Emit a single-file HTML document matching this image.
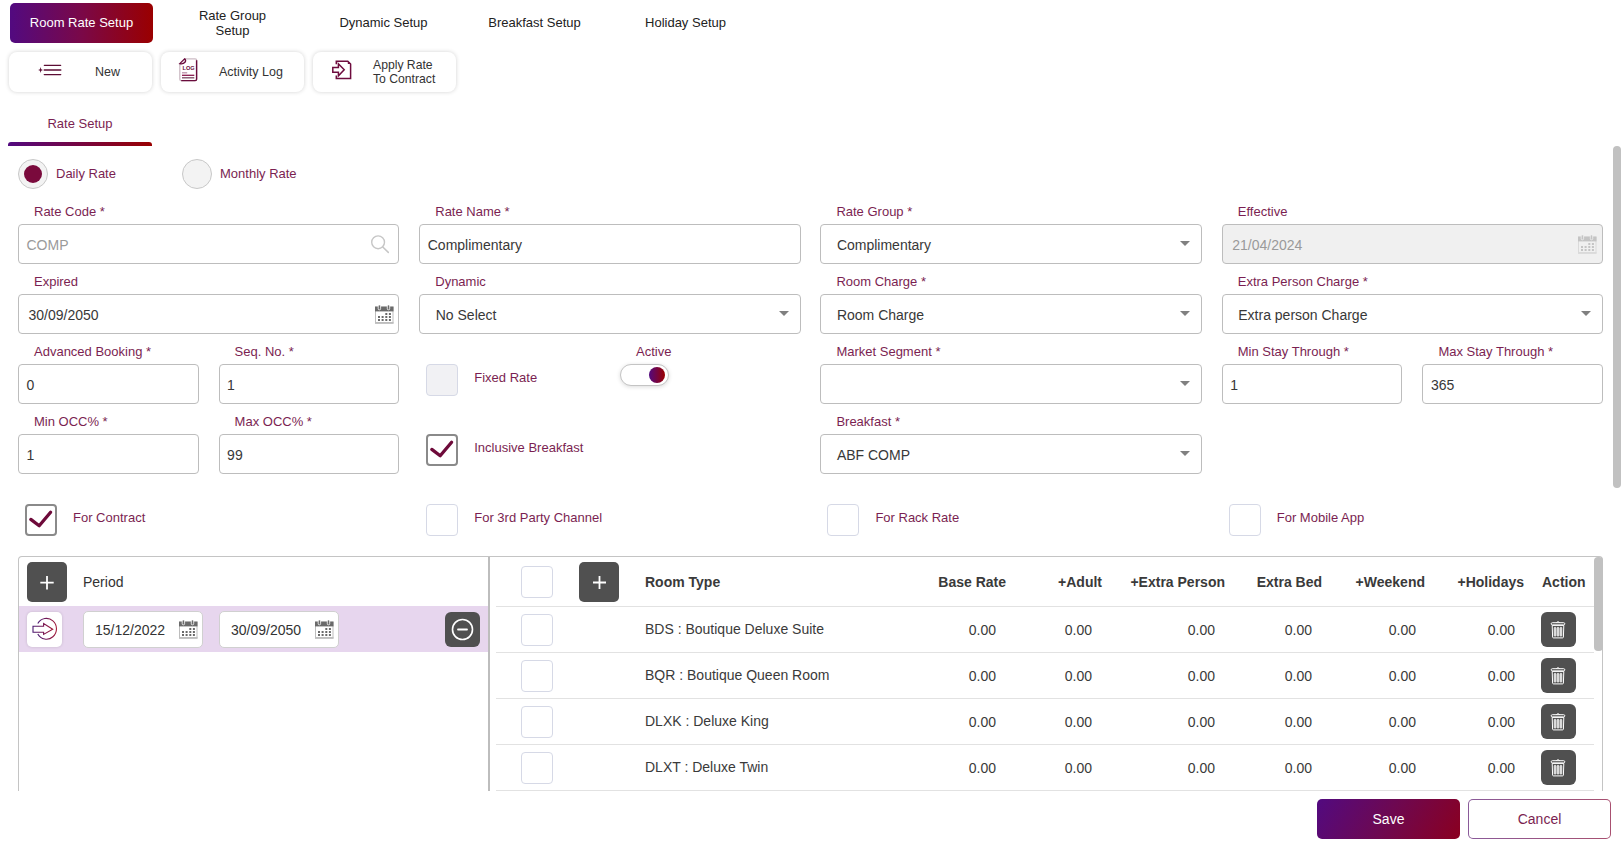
<!DOCTYPE html>
<html><head><meta charset="utf-8">
<style>
*{box-sizing:border-box;margin:0;padding:0}
html,body{width:1623px;height:844px;overflow:hidden;background:#fff;font-family:"Liberation Sans",sans-serif;color:#333}
.a{position:absolute}
.tab{position:absolute;top:3px;width:143px;height:40px;display:flex;align-items:center;justify-content:center;text-align:center;font-size:13px;line-height:15px;color:#222;padding-bottom:2px}
.tab.on{background:linear-gradient(90deg,#520a80 0%,#7a0848 50%,#9a0000 100%);color:#fff;border-radius:5px}
.btn{position:absolute;top:52px;width:143px;height:40px;border-radius:8px;box-shadow:0 0 4px rgba(0,0,0,.18);background:#fff;font-size:13px;color:#333}
.lbl{position:absolute;font-size:13px;color:#7b1f52;white-space:nowrap;line-height:16px;margin-top:1px}
.inp{position:absolute;height:40px;border:1px solid #bdbdbd;border-radius:4px;background:#fff;font-size:14px;color:#383838;line-height:38px;padding-top:1px;white-space:nowrap}
.car{margin-top:-1px}
.car{position:absolute;right:11px;top:17px;width:0;height:0;border-left:5px solid transparent;border-right:5px solid transparent;border-top:5px solid #808080}
.cb{position:absolute;width:32px;height:32px;border:1px solid #d6d9e6;border-radius:4px;background:#fff}
.cbt{position:absolute;font-size:13px;color:#7b1f52;line-height:16px;white-space:nowrap;margin-top:1px}

.dk{position:absolute;background:#505050;border-radius:5px}
.dk svg{display:block}
.di{position:absolute;height:37px;border:1px solid #d0d0d0;border-radius:5px;background:#fff;font-size:14px;line-height:35px;padding-left:11px;padding-top:1px;color:#333}
.th{position:absolute;top:574px;font-size:14px;font-weight:bold;color:#3a3a3a;line-height:16px;white-space:nowrap}
.td{position:absolute;font-size:14px;color:#3a3a3a;line-height:16px;white-space:nowrap;margin-top:1px}
.cal{position:absolute;right:5px;top:8px;width:19px;height:18px}

.ck{border:2px solid #8a8a8a !important}
</style></head><body>

<!-- top tabs -->
<div class="tab on" style="left:10px">Room Rate Setup</div>
<div class="tab" style="left:161px;padding-bottom:0">Rate Group<br>Setup</div>
<div class="tab" style="left:312px">Dynamic Setup</div>
<div class="tab" style="left:463px">Breakfast Setup</div>
<div class="tab" style="left:614px">Holiday Setup</div>

<!-- action buttons -->
<div class="btn" style="left:9px"></div>
<div class="btn" style="left:161px"></div>
<div class="btn" style="left:313px"></div>
<svg class="a" style="left:30px;top:55px" width="40" height="30" viewBox="30 55 40 30"><g stroke="#5c0c34" stroke-linecap="round"><path d="M44.3 65.3h16.4" stroke-width="1.2"/><path d="M44.3 70h16.4" stroke-width="1.6"/><path d="M44.3 74.6h16.4" stroke-width="1.4"/></g><path d="M40.6 67 L41.2 69.3 L43 70 L41.2 70.7 L40.6 73 L40 70.7 L38.2 70 L40 69.3Z" fill="#5c0c34"/></svg>
<div class="a" style="left:95px;top:64px;font-size:12.5px;line-height:16px;color:#333">New</div>
<svg class="a" style="left:170px;top:52px" width="40" height="38" viewBox="170 52 40 38"><path d="M184.6 58.8H195.2Q196.6 58.8 196.6 60.2V79.2Q196.6 80.6 195.2 80.6H181.2Q179.8 80.6 179.8 79.2V63.6" fill="none" stroke="#cdbcc5" stroke-width="1.3"/><path d="M196.6 60.2V79.2Q196.6 80.6 195.2 80.6H181.2" fill="none" stroke="#6a0c3c" stroke-width="1.4"/><path d="M179.8 63.6L184.6 58.8Q186.4 60.6 185 62.3Q183 64.4 179.8 63.6Z" fill="#f6eaf0" stroke="#6a0c3c" stroke-width="1.3"/><text x="188.6" y="69.8" font-family="Liberation Sans" font-size="5.6" font-weight="bold" fill="#6a0c3c" text-anchor="middle">LOG</text><path d="M182 72.8h5.2" stroke="#b88aa4" stroke-width="1.2"/><path d="M182 75.3h12.3" stroke="#8a1a4e" stroke-width="1.3"/><path d="M182 77.8h12.3" stroke="#7a4a64" stroke-width="1.3"/></svg>
<div class="a" style="left:219px;top:64px;font-size:12.5px;line-height:16px;color:#333">Activity Log</div>
<svg class="a" style="left:325px;top:55px" width="35" height="30" viewBox="325 55 35 30"><g fill="none" stroke="#6e0c3e" stroke-width="1.5" stroke-linejoin="miter"><path d="M336.3 64.2V61.2H347.8L350.6 64V78.6H336.3V75.4"/><path d="M332.8 67.4H338.4V63.8L344.2 69.8L338.4 75.8V72.2H332.8Z"/></g><path d="M347.8 61.2L350.6 64H347.8Z" fill="#6e0c3e"/></svg>
<div class="a" style="left:373px;top:58px;font-size:12.2px;line-height:14px;color:#333">Apply Rate<br>To Contract</div>

<!-- sub tab -->
<div class="a" style="left:8px;top:116px;width:144px;text-align:center;font-size:13px;color:#7b1f52;line-height:16px">Rate Setup</div>
<div class="a" style="left:8px;top:142px;width:144px;height:4px;border-radius:3px 3px 0 0;background:linear-gradient(90deg,#520a80,#9a0000)"></div>


<!-- radios -->
<div class="a" style="left:18px;top:159px;width:30px;height:30px;border-radius:50%;border:1px solid #c8c8c8;background:#f3f3f3"></div>
<div class="a" style="left:24.1px;top:165.1px;width:18px;height:18px;border-radius:50%;background:#7a0a3c"></div>
<div class="lbl" style="left:56px;top:165px">Daily Rate</div>
<div class="a" style="left:182px;top:159px;width:30px;height:30px;border-radius:50%;border:1px solid #c8c8c8;background:#f3f3f3"></div>
<div class="lbl" style="left:220px;top:165px">Monthly Rate</div>

<!-- row 1 -->
<div class="lbl" style="left:34px;top:203px">Rate Code *</div>
<div class="inp" style="left:18px;top:224px;width:381.25px;padding-left:7.5px;color:#9a9a9a">COMP</div>
<svg class="a" style="left:365px;top:232px" width="30" height="25" viewBox="365 232 30 25"><circle cx="378.1" cy="242.3" r="6.4" fill="none" stroke="#c6c6c6" stroke-width="1.4"/><path d="M382.8 247L388.3 252.4" stroke="#c6c6c6" stroke-width="1.5" stroke-linecap="round"/></svg>
<div class="lbl" style="left:435.25px;top:203px">Rate Name *</div>
<div class="inp" style="left:419.25px;top:224px;width:381.25px;padding-left:7.5px">Complimentary</div>
<div class="lbl" style="left:836.4px;top:203px">Rate Group *</div>
<div class="inp" style="left:820.4px;top:224px;width:381.25px;padding-left:15.5px">Complimentary<i class="car"></i></div>
<div class="lbl" style="left:1237.75px;top:203px">Effective</div>
<div class="inp" style="left:1221.75px;top:224px;width:381.25px;padding-left:9.5px;background:#f0f0f0;color:#9a9a9a">21/04/2024</div>
<svg class="a" style="left:1578px;top:235px" width="19" height="19" viewBox="0 0 19 19"><rect x="0.5" y="2" width="17.5" height="16" fill="#f0f0f0" stroke="#dadada" stroke-width="1"/><rect x="0" y="1.6" width="18.5" height="4.8" fill="#c4c4c4"/><rect x="3.2" y="0" width="2.4" height="4.8" rx="1" fill="#c4c4c4" stroke="#f0f0f0" stroke-width="0.8"/><rect x="12.3" y="0" width="2.4" height="4.8" rx="1" fill="#c4c4c4" stroke="#f0f0f0" stroke-width="0.8"/><rect x="10.3" y="8" width="2" height="2" fill="#c4c4c4"/><rect x="13.9" y="8" width="2" height="2" fill="#c4c4c4"/><rect x="3" y="11" width="2" height="2" fill="#c4c4c4"/><rect x="6.6" y="11" width="2" height="2" fill="#c4c4c4"/><rect x="10.3" y="11" width="2" height="2" fill="#c4c4c4"/><rect x="13.9" y="11" width="2" height="2" fill="#c4c4c4"/><rect x="3" y="14" width="2" height="2" fill="#c4c4c4"/><rect x="6.6" y="14" width="2" height="2" fill="#c4c4c4"/><rect x="10.3" y="14" width="2" height="2" fill="#c4c4c4"/><rect x="13.9" y="14" width="2" height="2" fill="#c4c4c4"/><rect x="0" y="17" width="18.5" height="1.8" fill="#dadada"/></svg>

<!-- row 2 -->
<div class="lbl" style="left:34px;top:273px">Expired</div>
<div class="inp" style="left:18px;top:294px;width:381.25px;padding-left:9.5px">30/09/2050</div>
<svg class="a" style="left:374.5px;top:305px" width="19" height="19" viewBox="0 0 19 19"><rect x="0.5" y="2" width="17.5" height="16" fill="#fff" stroke="#bdbdbd" stroke-width="1"/><rect x="0" y="1.6" width="18.5" height="4.8" fill="#6a6a6a"/><rect x="3.2" y="0" width="2.4" height="4.8" rx="1" fill="#6a6a6a" stroke="#fff" stroke-width="0.8"/><rect x="12.3" y="0" width="2.4" height="4.8" rx="1" fill="#6a6a6a" stroke="#fff" stroke-width="0.8"/><rect x="10.3" y="8" width="2" height="2" fill="#6a6a6a"/><rect x="13.9" y="8" width="2" height="2" fill="#6a6a6a"/><rect x="3" y="11" width="2" height="2" fill="#6a6a6a"/><rect x="6.6" y="11" width="2" height="2" fill="#6a6a6a"/><rect x="10.3" y="11" width="2" height="2" fill="#6a6a6a"/><rect x="13.9" y="11" width="2" height="2" fill="#6a6a6a"/><rect x="3" y="14" width="2" height="2" fill="#6a6a6a"/><rect x="6.6" y="14" width="2" height="2" fill="#6a6a6a"/><rect x="10.3" y="14" width="2" height="2" fill="#6a6a6a"/><rect x="13.9" y="14" width="2" height="2" fill="#6a6a6a"/><rect x="0" y="17" width="18.5" height="1.8" fill="#bdbdbd"/></svg>
<div class="lbl" style="left:435.25px;top:273px">Dynamic</div>
<div class="inp" style="left:419.25px;top:294px;width:381.25px;padding-left:15.5px">No Select<i class="car"></i></div>
<div class="lbl" style="left:836.4px;top:273px">Room Charge *</div>
<div class="inp" style="left:820.4px;top:294px;width:381.25px;padding-left:15.5px">Room Charge<i class="car"></i></div>
<div class="lbl" style="left:1237.75px;top:273px">Extra Person Charge *</div>
<div class="inp" style="left:1221.75px;top:294px;width:381.25px;padding-left:15.5px">Extra person Charge<i class="car"></i></div>

<!-- row 3 -->
<div class="lbl" style="left:34px;top:343px">Advanced Booking *</div>
<div class="inp" style="left:18px;top:364px;width:180.6px;padding-left:7.5px">0</div>
<div class="lbl" style="left:234.6px;top:343px">Seq. No. *</div>
<div class="inp" style="left:218.6px;top:364px;width:180.6px;padding-left:7.5px">1</div>
<div class="cb" style="left:426.25px;top:364px;background:#f1f1f4"></div>
<div class="cbt" style="left:474.25px;top:369px">Fixed Rate</div>
<div class="lbl" style="left:636px;top:343px">Active</div>
<div class="a" style="left:620px;top:364px;width:49px;height:22px;border-radius:11px;background:#fff;border:1px solid #c4c4c4;box-shadow:0 1px 4px rgba(0,0,0,.14)"></div>
<div class="a" style="left:649.2px;top:366.9px;width:16px;height:16px;border-radius:50%;background:linear-gradient(90deg,#520a80,#9a0000)"></div>
<div class="lbl" style="left:836.4px;top:343px">Market Segment *</div>
<div class="inp" style="left:820.4px;top:364px;width:381.25px;padding-left:15.5px"><i class="car"></i></div>
<div class="lbl" style="left:1237.75px;top:343px">Min Stay Through *</div>
<div class="inp" style="left:1221.75px;top:364px;width:180.6px;padding-left:7.5px">1</div>
<div class="lbl" style="left:1438.4px;top:343px">Max Stay Through *</div>
<div class="inp" style="left:1422.4px;top:364px;width:180.6px;padding-left:7.5px">365</div>

<!-- row 4 -->
<div class="lbl" style="left:34px;top:413px">Min OCC% *</div>
<div class="inp" style="left:18px;top:434px;width:180.6px;padding-left:7.5px">1</div>
<div class="lbl" style="left:234.6px;top:413px">Max OCC% *</div>
<div class="inp" style="left:218.6px;top:434px;width:180.6px;padding-left:7.5px">99</div>
<div class="cb ck" style="left:426.25px;top:434px"><svg class="a" style="left:0;top:0" width="32" height="32" viewBox="0 0 32 32"><path d="M5.8 15.4L14.2 21.8L25.6 8.2" fill="none" stroke="#6e0a3a" stroke-width="3.3" stroke-linecap="round" stroke-linejoin="round" transform="translate(-2,-2)"/></svg></div>
<div class="cbt" style="left:474.25px;top:439px">Inclusive Breakfast</div>
<div class="lbl" style="left:836.4px;top:413px">Breakfast *</div>
<div class="inp" style="left:820.4px;top:434px;width:381.25px;padding-left:15.5px">ABF COMP<i class="car"></i></div>

<!-- checkbox row -->
<div class="cb ck" style="left:25px;top:504px"><svg class="a" style="left:0;top:0" width="32" height="32" viewBox="0 0 32 32"><path d="M5.8 15.4L14.2 21.8L25.6 8.2" fill="none" stroke="#6e0a3a" stroke-width="3.3" stroke-linecap="round" stroke-linejoin="round" transform="translate(-2,-2)"/></svg></div>
<div class="cbt" style="left:73px;top:509px">For Contract</div>
<div class="cb" style="left:426.25px;top:504px"></div>
<div class="cbt" style="left:474.25px;top:509px">For 3rd Party Channel</div>
<div class="cb" style="left:827.4px;top:504px"></div>
<div class="cbt" style="left:875.4px;top:509px">For Rack Rate</div>
<div class="cb" style="left:1228.75px;top:504px"></div>
<div class="cbt" style="left:1276.75px;top:509px">For Mobile App</div>


<!-- table container -->
<div class="a" style="left:18px;top:556px;width:1585px;height:260px;border:1px solid #c4c4c4;border-bottom:none;border-radius:4px 4px 0 0"></div>
<div class="a" style="left:488px;top:557px;width:2px;height:234px;background:#bdbdbd"></div>
<div class="a" style="left:1594px;top:557px;width:8.5px;height:94px;border-radius:4px;background:#c1c1c1"></div>
<div class="a" style="left:0;top:791px;width:1623px;height:53px;background:#fff"></div>

<!-- left panel -->
<div class="dk" style="left:27px;top:562px;width:40px;height:40px"><svg width="40" height="40"><path d="M20 14v13.4M13.3 20.7h13.4" stroke="#fff" stroke-width="1.8"/></svg></div>
<div class="a" style="left:83px;top:574px;font-size:14px;line-height:16px;color:#333">Period</div>
<div class="a" style="left:19px;top:606px;width:469px;height:46px;background:#e7d6ee"></div>
<div class="a" style="left:27px;top:612px;width:35px;height:35px;border-radius:5px;background:#fff;box-shadow:0 0 3px rgba(0,0,0,.15)"></div>
<svg class="a" style="left:27px;top:612px" width="35" height="35" viewBox="27 612 35 35"><defs><linearGradient id="ga" x1="0" x2="1"><stop offset="0" stop-color="#4a1870"/><stop offset="1" stop-color="#a01838"/></linearGradient></defs><g fill="none" stroke="url(#ga)" stroke-width="1.1"><path d="M37.8 623.6A10 10.4 0 1 1 37.8 634"/><path d="M33 626.2H43.6V623.6L52.7 629.3L43.6 634.4V632.3H33Z"/></g></svg>
<div class="di" style="left:83px;top:611px;width:120px">15/12/2022</div>
<svg class="a" style="left:178.5px;top:620px" width="19" height="19" viewBox="0 0 19 19"><rect x="0.5" y="2" width="17.5" height="16" fill="#fff" stroke="#bdbdbd" stroke-width="1"/><rect x="0" y="1.6" width="18.5" height="4.8" fill="#6a6a6a"/><rect x="3.2" y="0" width="2.4" height="4.8" rx="1" fill="#6a6a6a" stroke="#fff" stroke-width="0.8"/><rect x="12.3" y="0" width="2.4" height="4.8" rx="1" fill="#6a6a6a" stroke="#fff" stroke-width="0.8"/><rect x="10.3" y="8" width="2" height="2" fill="#6a6a6a"/><rect x="13.9" y="8" width="2" height="2" fill="#6a6a6a"/><rect x="3" y="11" width="2" height="2" fill="#6a6a6a"/><rect x="6.6" y="11" width="2" height="2" fill="#6a6a6a"/><rect x="10.3" y="11" width="2" height="2" fill="#6a6a6a"/><rect x="13.9" y="11" width="2" height="2" fill="#6a6a6a"/><rect x="3" y="14" width="2" height="2" fill="#6a6a6a"/><rect x="6.6" y="14" width="2" height="2" fill="#6a6a6a"/><rect x="10.3" y="14" width="2" height="2" fill="#6a6a6a"/><rect x="13.9" y="14" width="2" height="2" fill="#6a6a6a"/><rect x="0" y="17" width="18.5" height="1.8" fill="#bdbdbd"/></svg>
<div class="di" style="left:219px;top:611px;width:120px">30/09/2050</div>
<svg class="a" style="left:314.5px;top:620px" width="19" height="19" viewBox="0 0 19 19"><rect x="0.5" y="2" width="17.5" height="16" fill="#fff" stroke="#bdbdbd" stroke-width="1"/><rect x="0" y="1.6" width="18.5" height="4.8" fill="#6a6a6a"/><rect x="3.2" y="0" width="2.4" height="4.8" rx="1" fill="#6a6a6a" stroke="#fff" stroke-width="0.8"/><rect x="12.3" y="0" width="2.4" height="4.8" rx="1" fill="#6a6a6a" stroke="#fff" stroke-width="0.8"/><rect x="10.3" y="8" width="2" height="2" fill="#6a6a6a"/><rect x="13.9" y="8" width="2" height="2" fill="#6a6a6a"/><rect x="3" y="11" width="2" height="2" fill="#6a6a6a"/><rect x="6.6" y="11" width="2" height="2" fill="#6a6a6a"/><rect x="10.3" y="11" width="2" height="2" fill="#6a6a6a"/><rect x="13.9" y="11" width="2" height="2" fill="#6a6a6a"/><rect x="3" y="14" width="2" height="2" fill="#6a6a6a"/><rect x="6.6" y="14" width="2" height="2" fill="#6a6a6a"/><rect x="10.3" y="14" width="2" height="2" fill="#6a6a6a"/><rect x="13.9" y="14" width="2" height="2" fill="#6a6a6a"/><rect x="0" y="17" width="18.5" height="1.8" fill="#bdbdbd"/></svg>
<div class="dk" style="left:445px;top:612px;width:35px;height:35px;border-radius:6px"><svg width="35" height="35"><circle cx="17.5" cy="17.5" r="10" fill="none" stroke="#fff" stroke-width="1.6"/><path d="M13 17.5h9" stroke="#fff" stroke-width="1.8" stroke-linecap="round"/></svg></div>

<!-- right table header -->
<div class="cb" style="left:521px;top:566px;width:32px;height:32px"></div>
<div class="dk" style="left:579px;top:562px;width:40px;height:40px"><svg width="40" height="40"><path d="M20.5 14v13M14 20.5h13" stroke="#fff" stroke-width="1.8"/></svg></div>
<div class="th" style="left:645px">Room Type</div>
<div class="th" style="right:617px">Base Rate</div>
<div class="th" style="right:521px">+Adult</div>
<div class="th" style="right:398px">+Extra Person</div>
<div class="th" style="right:301px">Extra Bed</div>
<div class="th" style="right:198px">+Weekend</div>
<div class="th" style="right:99px">+Holidays</div>
<div class="th" style="left:1542px">Action</div>
<div class="a" style="left:496px;top:606px;width:1098px;height:1px;background:#e2e2e2"></div>
<div class="cb" style="left:521px;top:614px;width:32px;height:32px"></div>
<div class="td" style="left:645px;top:621px;margin-top:0">BDS : Boutique Deluxe Suite</div>
<div class="td" style="right:627px;top:621px">0.00</div>
<div class="td" style="right:531px;top:621px">0.00</div>
<div class="td" style="right:408px;top:621px">0.00</div>
<div class="td" style="right:311px;top:621px">0.00</div>
<div class="td" style="right:207px;top:621px">0.00</div>
<div class="td" style="right:108px;top:621px">0.00</div>
<div class="dk" style="left:1541px;top:612px;width:35px;height:35px;border-radius:6px"><svg width="35" height="35" viewBox="0 0 35 35"><g fill="none" stroke="#fff"><rect x="10.2" y="10.7" width="13.6" height="2.2" rx="1.1" stroke-width="1"/><path d="M15.3 10.6Q17 8.8 18.7 10.6" stroke-width="1"/><path d="M11.2 13.4H22.8L22.4 25.1Q22.3 25.9 21.5 25.9H12.5Q11.7 25.9 11.6 25.1Z" stroke-width="1"/><rect x="13.2" y="15.2" width="1.7" height="9" rx=".85" fill="#d0d0d0" stroke-width=".7"/><rect x="16.15" y="15.2" width="1.7" height="9" rx=".85" fill="#d0d0d0" stroke-width=".7"/><rect x="19.1" y="15.2" width="1.7" height="9" rx=".85" fill="#d0d0d0" stroke-width=".7"/></g></svg></div>
<div class="a" style="left:496px;top:652px;width:1098px;height:1px;background:#e2e2e2"></div>
<div class="cb" style="left:521px;top:660px;width:32px;height:32px"></div>
<div class="td" style="left:645px;top:667px;margin-top:0">BQR : Boutique Queen Room</div>
<div class="td" style="right:627px;top:667px">0.00</div>
<div class="td" style="right:531px;top:667px">0.00</div>
<div class="td" style="right:408px;top:667px">0.00</div>
<div class="td" style="right:311px;top:667px">0.00</div>
<div class="td" style="right:207px;top:667px">0.00</div>
<div class="td" style="right:108px;top:667px">0.00</div>
<div class="dk" style="left:1541px;top:658px;width:35px;height:35px;border-radius:6px"><svg width="35" height="35" viewBox="0 0 35 35"><g fill="none" stroke="#fff"><rect x="10.2" y="10.7" width="13.6" height="2.2" rx="1.1" stroke-width="1"/><path d="M15.3 10.6Q17 8.8 18.7 10.6" stroke-width="1"/><path d="M11.2 13.4H22.8L22.4 25.1Q22.3 25.9 21.5 25.9H12.5Q11.7 25.9 11.6 25.1Z" stroke-width="1"/><rect x="13.2" y="15.2" width="1.7" height="9" rx=".85" fill="#d0d0d0" stroke-width=".7"/><rect x="16.15" y="15.2" width="1.7" height="9" rx=".85" fill="#d0d0d0" stroke-width=".7"/><rect x="19.1" y="15.2" width="1.7" height="9" rx=".85" fill="#d0d0d0" stroke-width=".7"/></g></svg></div>
<div class="a" style="left:496px;top:698px;width:1098px;height:1px;background:#e2e2e2"></div>
<div class="cb" style="left:521px;top:706px;width:32px;height:32px"></div>
<div class="td" style="left:645px;top:713px;margin-top:0">DLXK : Deluxe King</div>
<div class="td" style="right:627px;top:713px">0.00</div>
<div class="td" style="right:531px;top:713px">0.00</div>
<div class="td" style="right:408px;top:713px">0.00</div>
<div class="td" style="right:311px;top:713px">0.00</div>
<div class="td" style="right:207px;top:713px">0.00</div>
<div class="td" style="right:108px;top:713px">0.00</div>
<div class="dk" style="left:1541px;top:704px;width:35px;height:35px;border-radius:6px"><svg width="35" height="35" viewBox="0 0 35 35"><g fill="none" stroke="#fff"><rect x="10.2" y="10.7" width="13.6" height="2.2" rx="1.1" stroke-width="1"/><path d="M15.3 10.6Q17 8.8 18.7 10.6" stroke-width="1"/><path d="M11.2 13.4H22.8L22.4 25.1Q22.3 25.9 21.5 25.9H12.5Q11.7 25.9 11.6 25.1Z" stroke-width="1"/><rect x="13.2" y="15.2" width="1.7" height="9" rx=".85" fill="#d0d0d0" stroke-width=".7"/><rect x="16.15" y="15.2" width="1.7" height="9" rx=".85" fill="#d0d0d0" stroke-width=".7"/><rect x="19.1" y="15.2" width="1.7" height="9" rx=".85" fill="#d0d0d0" stroke-width=".7"/></g></svg></div>
<div class="a" style="left:496px;top:744px;width:1098px;height:1px;background:#e2e2e2"></div>
<div class="cb" style="left:521px;top:752px;width:32px;height:32px"></div>
<div class="td" style="left:645px;top:759px;margin-top:0">DLXT : Deluxe Twin</div>
<div class="td" style="right:627px;top:759px">0.00</div>
<div class="td" style="right:531px;top:759px">0.00</div>
<div class="td" style="right:408px;top:759px">0.00</div>
<div class="td" style="right:311px;top:759px">0.00</div>
<div class="td" style="right:207px;top:759px">0.00</div>
<div class="td" style="right:108px;top:759px">0.00</div>
<div class="dk" style="left:1541px;top:750px;width:35px;height:35px;border-radius:6px"><svg width="35" height="35" viewBox="0 0 35 35"><g fill="none" stroke="#fff"><rect x="10.2" y="10.7" width="13.6" height="2.2" rx="1.1" stroke-width="1"/><path d="M15.3 10.6Q17 8.8 18.7 10.6" stroke-width="1"/><path d="M11.2 13.4H22.8L22.4 25.1Q22.3 25.9 21.5 25.9H12.5Q11.7 25.9 11.6 25.1Z" stroke-width="1"/><rect x="13.2" y="15.2" width="1.7" height="9" rx=".85" fill="#d0d0d0" stroke-width=".7"/><rect x="16.15" y="15.2" width="1.7" height="9" rx=".85" fill="#d0d0d0" stroke-width=".7"/><rect x="19.1" y="15.2" width="1.7" height="9" rx=".85" fill="#d0d0d0" stroke-width=".7"/></g></svg></div>
<div class="a" style="left:496px;top:790px;width:1098px;height:1px;background:#e2e2e2"></div>

<!-- footer buttons -->
<div class="a" style="left:1317px;top:799px;width:143px;height:40px;border-radius:5px;background:linear-gradient(120deg,#520a80 0%,#6e0850 50%,#8a0020 100%);color:#fff;font-size:14px;line-height:40px;text-align:center">Save</div>
<div class="a" style="left:1468px;top:799px;width:143px;height:40px;border-radius:5px;background:linear-gradient(#fff,#fff) padding-box,linear-gradient(90deg,#8a5a9a,#a85070) border-box;border:1px solid transparent;color:#7b1f52;font-size:14px;line-height:38px;text-align:center">Cancel</div>

<!-- main scrollbar -->
<div class="a" style="left:1613px;top:146px;width:8px;height:342px;border-radius:4px;background:#c1c1c1"></div>

</body></html>
